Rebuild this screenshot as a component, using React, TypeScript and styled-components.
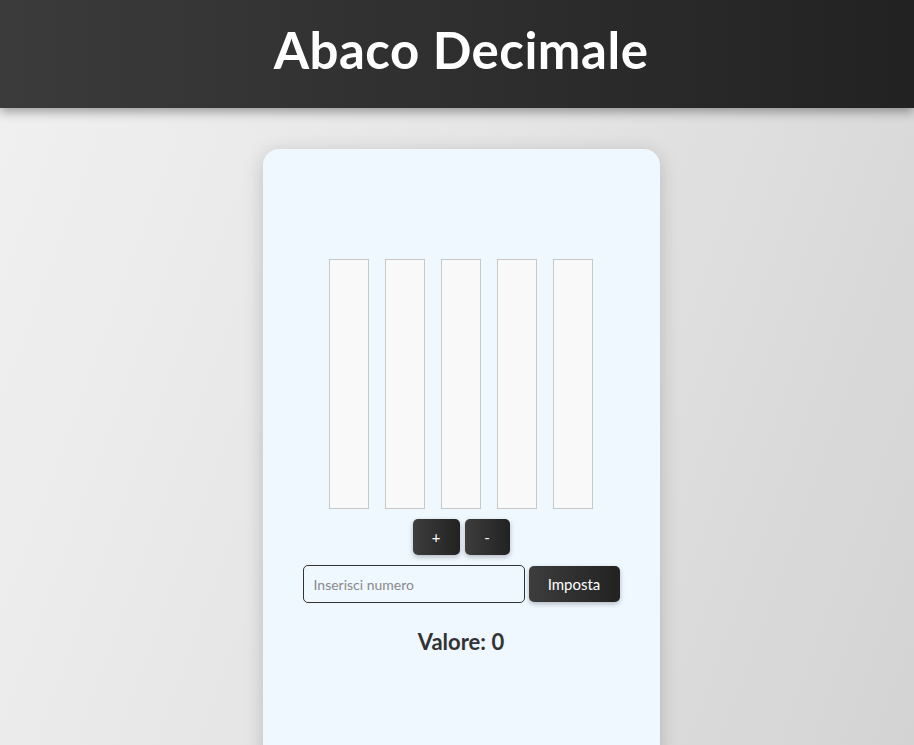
import React, { useState } from "react";
import styled, { createGlobalStyle } from "styled-components";

const Global = createGlobalStyle`
  html, body { margin: 0; padding: 0; }
  body {
    font-family: "Lato", "Noto Sans", sans-serif;
    min-height: 745px;
    background: linear-gradient(110deg, #f1f1f1 0%, #e4e4e4 50%, #d3d3d3 100%);
    overflow: hidden;
  }
`;

const Page = styled.div`
  display: flex;
  flex-direction: column;
  align-items: center;
  min-height: 745px;
`;

const Header = styled.header`
  align-self: stretch;
  height: 108px;
  display: flex;
  align-items: center;
  justify-content: center;
  background: linear-gradient(90deg, #3b3b3b 0%, #2c2c2c 60%, #222222 100%);
  box-shadow: 0 4px 10px rgba(0, 0, 0, 0.35);
  position: relative;
  z-index: 1;
`;

const Title = styled.h1`
  margin: 0 0 0 8px;
  color: #ffffff;
  font-size: 51px;
  font-weight: 700;
  letter-spacing: 0.5px;
  padding-bottom: 10px;
`;

const Card = styled.main`
  margin-top: 41px;
  margin-left: 8px;
  width: 397px;
  min-height: 620px;
  box-sizing: border-box;
  background: #eff7ff;
  border-radius: 16px 16px 0 0;
  box-shadow: 0 4px 20px rgba(0, 0, 0, 0.18);
  display: flex;
  flex-direction: column;
  align-items: center;
  padding-top: 110px;
`;

const Abacus = styled.div`
  display: flex;
  gap: 16px;
`;

const Rod = styled.div`
  width: 40px;
  height: 250px;
  box-sizing: border-box;
  background: #f9f9f9;
  border: 1px solid #c8c8c8;
`;

const Controls = styled.div`
  display: flex;
  gap: 5px;
  margin-top: 10px;
`;

const DarkButton = styled.button<{ $w: number }>`
  width: ${(p) => p.$w}px;
  height: 36px;
  border: none;
  border-radius: 5px;
  background: linear-gradient(90deg, #3d3d3d 0%, #222222 100%);
  color: #ffffff;
  font-family: "Lato", "Noto Sans", sans-serif;
  font-size: 15px;
  box-shadow: 0 2px 5px rgba(0, 0, 0, 0.25);
  cursor: pointer;
  padding: 0;
`;

const SetRow = styled.div`
  display: flex;
  align-items: center;
  gap: 4px;
  margin-top: 10px;
`;

const NumberInput = styled.input`
  width: 222px;
  height: 38px;
  box-sizing: border-box;
  border: 1px solid #333;
  border-radius: 5px;
  background: #eff7ff;
  padding: 0 10px;
  font-family: "Lato", "Noto Sans", sans-serif;
  font-size: 14px;
  color: #333;
  outline: none;
  &::placeholder { color: #8a8a8a; }
`;

const Value = styled.div`
  margin-top: 25px;
  font-size: 22px;
  font-weight: 700;
  color: #333;
`;

export default function App() {
  const [val, setVal] = useState(0);
  const [text, setText] = useState("");
  return (
    <>
      <Global />
      <Page>
        <Header>
          <Title>Abaco Decimale</Title>
        </Header>
        <Card>
          <Abacus>
            {[0, 1, 2, 3, 4].map((i) => (
              <Rod key={i} />
            ))}
          </Abacus>
          <Controls>
            <DarkButton $w={47} onClick={() => setVal((v) => Math.min(99999, v + 1))}>+</DarkButton>
            <DarkButton $w={45} onClick={() => setVal((v) => Math.max(0, v - 1))}>-</DarkButton>
          </Controls>
          <SetRow>
            <NumberInput
              placeholder="Inserisci numero"
              value={text}
              onChange={(e) => setText(e.target.value)}
            />
            <DarkButton $w={91} onClick={() => setVal(Number(text) || 0)}>Imposta</DarkButton>
          </SetRow>
          <Value>Valore: {val}</Value>
        </Card>
      </Page>
    </>
  );
}
